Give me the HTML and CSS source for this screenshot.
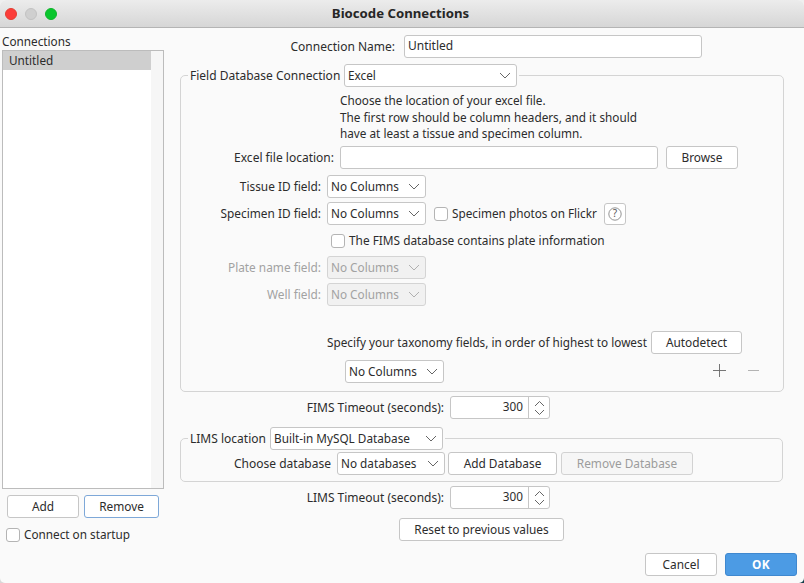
FILE: index.html
```html
<!DOCTYPE html>
<html lang="en">
<head>
    <meta charset="UTF-8">
    <meta name="viewport" content="width=device-width, initial-scale=1.0">
    <title>Biocode Connections</title>
    <link rel="stylesheet" href="styles.css">
</head>
<body>
<div class="window">

    <div class="titlebar">
        <span class="light red"></span>
        <span class="light grey"></span>
        <span class="light green"></span>
        <div class="title">Biocode Connections</div>
    </div>

    <div class="content">

        <!-- Connections list -->
        <div class="sidebar">
            <div class="side-label">Connections</div>
            <div class="list">
                <div class="list-items"><div class="list-item">Untitled</div></div>
                <div class="scroll-track"></div>
            </div>
            <div class="side-buttons">
                <button class="btn btn-add">Add</button>
                <button class="btn btn-remove">Remove</button>
            </div>
            <label class="check side-check"><span class="box"></span>Connect on startup</label>
        </div>

        <div class="main">

            <div class="row name-row">
                <span class="lbl lbl-name">Connection Name:</span>
                <input class="field name-field" type="text" value="Untitled">
            </div>

            <!-- FIMS -->
            <fieldset class="group fims-group">
                <legend class="legend">
                    <span class="legend-fims">Field Database Connection</span>
                    <div class="combo combo-excel">Excel
                        <svg class="chev" width="12" height="7" viewBox="0 0 12 7"><path d="M1 1l5 5 5-5"/></svg>
                    </div>
                </legend>

                <div class="hint">
                    Choose the location of your excel file.<br>
                    The first row should be column headers, and it should<br>
                    have at least a tissue and specimen column.
                </div>

                <div class="row excel-row">
                    <span class="lbl lbl-excel">Excel file location:</span>
                    <input class="field excel-field" type="text">
                    <button class="btn btn-browse">Browse</button>
                </div>

                <div class="row tissue-row">
                    <span class="lbl lbl-field">Tissue ID field:</span>
                    <div class="combo combo-col">No Columns
                        <svg class="chev" width="12" height="7" viewBox="0 0 12 7"><path d="M1 1l5 5 5-5"/></svg>
                    </div>
                </div>

                <div class="row small-gap">
                    <span class="lbl lbl-field">Specimen ID field:</span>
                    <div class="combo combo-col">No Columns
                        <svg class="chev" width="12" height="7" viewBox="0 0 12 7"><path d="M1 1l5 5 5-5"/></svg>
                    </div>
                    <label class="check flickr-check"><span class="box"></span><span class="flickr-text">Specimen photos on Flickr</span></label>
                    <button class="help" aria-label="Help">
                        <svg width="14" height="14" viewBox="0 0 14 14"><circle cx="7" cy="7" r="6.2"/><text x="7" y="10.4" text-anchor="middle">?</text></svg>
                    </button>
                </div>

                <div class="row small-gap plate-row">
                    <label class="check"><span class="box"></span>The FIMS database contains plate information</label>
                </div>

                <div class="row small-gap disabled">
                    <span class="lbl lbl-field">Plate name field:</span>
                    <div class="combo combo-col">No Columns
                        <svg class="chev" width="12" height="7" viewBox="0 0 12 7"><path d="M1 1l5 5 5-5"/></svg>
                    </div>
                </div>

                <div class="row small-gap disabled">
                    <span class="lbl lbl-field">Well field:</span>
                    <div class="combo combo-col">No Columns
                        <svg class="chev" width="12" height="7" viewBox="0 0 12 7"><path d="M1 1l5 5 5-5"/></svg>
                    </div>
                </div>

                <div class="row taxonomy-row">
                    <span class="taxonomy-text">Specify your taxonomy fields, in order of highest to lowest</span>
                    <button class="btn btn-auto">Autodetect</button>
                </div>

                <div class="row taxon-row">
                    <div class="combo combo-col">No Columns
                        <svg class="chev" width="12" height="7" viewBox="0 0 12 7"><path d="M1 1l5 5 5-5"/></svg>
                    </div>
                    <svg class="plus" width="13" height="13" viewBox="0 0 13 13"><path d="M6.5 0v13M0 6.5h13"/></svg>
                    <svg class="minus" width="11" height="13" viewBox="0 0 11 13"><path d="M0 6.5h11"/></svg>
                </div>
            </fieldset>

            <div class="row timeout-row fims-timeout">
                <span class="lbl lbl-timeout">FIMS Timeout (seconds):</span>
                <div class="spinner">
                    <span class="spin-value">300</span>
                    <span class="spin-arrows">
                        <svg width="11" height="16" viewBox="0 0 11 16"><path d="M1 6l4.5-4.5L10 6M1 10l4.5 4.5L10 10"/></svg>
                    </span>
                </div>
            </div>

            <!-- LIMS -->
            <fieldset class="group lims-group">
                <legend class="legend">
                    <span class="legend-lims">LIMS location</span>
                    <div class="combo combo-lims">Built-in MySQL Database
                        <svg class="chev" width="12" height="7" viewBox="0 0 12 7"><path d="M1 1l5 5 5-5"/></svg>
                    </div>
                </legend>
                <div class="row db-row">
                    <span class="lbl lbl-db">Choose database</span>
                    <div class="combo combo-db">No databases
                        <svg class="chev" width="12" height="7" viewBox="0 0 12 7"><path d="M1 1l5 5 5-5"/></svg>
                    </div>
                    <button class="btn btn-add-db">Add Database</button>
                    <button class="btn btn-remove-db" disabled>Remove Database</button>
                </div>
            </fieldset>

            <div class="row timeout-row lims-timeout">
                <span class="lbl lbl-timeout">LIMS Timeout (seconds):</span>
                <div class="spinner">
                    <span class="spin-value">300</span>
                    <span class="spin-arrows">
                        <svg width="11" height="16" viewBox="0 0 11 16"><path d="M1 6l4.5-4.5L10 6M1 10l4.5 4.5L10 10"/></svg>
                    </span>
                </div>
            </div>

            <button class="btn btn-reset">Reset to previous values</button>

            <div class="footer">
                <button class="btn btn-cancel">Cancel</button>
                <button class="btn btn-ok">OK</button>
            </div>
        </div>
    </div>
</div>
</body>
</html>
```

FILE: styles.css
```css
* {
    box-sizing: border-box;
}
html, body {
    margin: 0;
    height: 100%;
    overflow: hidden;
}
body {
    font-family: "Noto Sans", sans-serif;
    font-size: 12px;
    color: #2c2c2c;
    /* desktop showing through the window's rounded corners */
    background: linear-gradient(to right, #d8d8d8 50%, #123f4a 50%) bottom / 100% 8px no-repeat, #efefef;
}
.window {
    width: 804px;
    height: 583px;
    overflow: hidden;
    background-color: #fafafa;
    border-radius: 6px 6px 5px 5px;
}

/* Title bar */
.titlebar {
    display: flex;
    align-items: center;
    height: 28px;
    padding-left: 5px;
    padding-top: 1px;
    gap: 8px;
    position: relative;
    background: linear-gradient(#ececec, #d6d6d6);
    border-bottom: 1px solid #b4b4b4;
}
.light {
    width: 12px;
    height: 12px;
    border-radius: 50%;
}
.red {
    background-color: #fc3d39;
    border: 1px solid #e33e32;
}
.grey {
    background-color: #cfcfcf;
    border: 1px solid #c2c2c2;
}
.green {
    background-color: #09c62d;
    border: 1px solid #0db52a;
}
.title {
    position: absolute;
    left: 0;
    right: 3px;
    top: 5px;
    text-align: center;
    font-size: 13.2px;
    font-weight: 700;
    line-height: 17px;
    color: #262626;
}

.content {
    display: flex;
}

/* Connections list */
.sidebar {
    width: 164px;
    flex: none;
    padding-left: 2px;
    font-size: 11.75px;
}
.side-label {
    line-height: 17px;
    margin-top: 5px;
}
.list {
    display: flex;
    height: 439px;
    border: 1px solid #bcbcbc;
    background-color: white;
}
.list-items {
    flex: 1;
}
.list-item {
    height: 19px;
    line-height: 19px;
    padding-left: 6px;
    background-color: #cfcfcf;
}
.scroll-track {
    width: 12px;
    background-color: #f6f6f6;
}
.side-buttons {
    display: flex;
    gap: 5px;
    margin: 6px 0 0 5px;
}
.side-check {
    margin: 8px 0 0 4px;
}

/* Controls */
.btn {
    height: 23px;
    padding: 0 0 2px;
    font-family: inherit;
    font-size: 11.85px;
    color: #2c2c2c;
    background-color: white;
    border: 1px solid #c6c6c6;
    border-radius: 3px;
}
.btn-add { width: 72px; }
.btn-remove { width: 75px; border-color: #7ea8d8; }
.btn-browse { width: 72px; margin-left: 2px; }
.btn-auto { width: 91px; }
.btn-add-db { width: 109px; margin-left: -3px; }
.btn-remove-db {
    width: 132px;
    margin-left: -2px;
    color: #9c9c9c;
    background-color: #f6f6f6;
    border-color: #d2d2d2;
}
.btn-reset {
    display: block;
    width: 165px;
    margin: 9px 0 0 235px;
}
.btn-cancel { width: 72px; }
.btn-ok {
    width: 72px;
    color: white;
    font-weight: 700;
    background-color: #4c9be4;
    border-color: #3f88cf;
    letter-spacing: 0.5px;
}
.field {
    height: 23px;
    padding: 0 3px 2px;
    font-family: inherit;
    font-size: 12px;
    color: #2c2c2c;
    background-color: white;
    border: 1px solid #c6c6c6;
    border-radius: 3px;
}
.combo {
    display: flex;
    align-items: center;
    justify-content: space-between;
    height: 23px;
    padding: 0 5px 2px 3px;
    flex: none;
    font-size: 11.75px;
    background-color: white;
    border: 1px solid #c6c6c6;
    border-radius: 3px;
}
.chev {
    flex: none;
    margin-top: 2px;
    fill: none;
    stroke: #555;
    stroke-width: 0.9;
}
.combo-col { width: 99px; }
.combo-excel { width: 173px; }
.combo-lims { width: 173px; }
.combo-db { width: 108px; }
.check {
    display: flex;
    align-items: center;
    gap: 4px;
    line-height: 17px;
}
.box {
    width: 14px;
    height: 14px;
    flex: none;
    background-color: white;
    border: 1px solid #b4b4b4;
    border-radius: 3px;
}
.main .check {
    font-size: 11.85px;
}

/* Form layout */
.main {
    flex: 1;
}
.row {
    display: flex;
    align-items: center;
    gap: 6px;
}
.lbl {
    flex: none;
    padding-bottom: 1px;
    text-align: right;
}
.name-row {
    margin-top: 7px;
}
.lbl-name { width: 231px; margin-right: 3px; }
.name-field { width: 298px; }
.group {
    margin: 0 0 0 16px;
    padding: 0 0 8px;
    min-width: 0;
    border: 1px solid #d4d4d4;
    border-radius: 5px;
}
.fims-group {
    width: 604px;
    margin-top: 6px;
}
.lims-group {
    width: 603px;
    margin-top: 8px;
    padding-bottom: 6px;
}
.legend {
    display: flex;
    align-items: center;
    margin-left: 7px;
    padding: 0 2px;
}
.legend span {
    padding-bottom: 1px;
}
.legend-fims { width: 154px; }
.legend-lims { width: 80px; }
.hint {
    height: 50px;
    margin: 5px 0 0 159px;
    font-size: 11.75px;
    line-height: 16.5px;
}
.excel-row { margin-top: 4px; }
.lbl-excel { width: 153px; }
.excel-field { width: 318px; }
.tissue-row { margin-top: 6px; }
.small-gap { margin-top: 4px; }
.lbl-field { width: 140px; font-size: 11.85px; }
.flickr-check { margin-left: 2px; }
.flickr-text { width: 152px; font-size: 11.75px; }
.help {
    display: flex;
    align-items: center;
    justify-content: center;
    width: 22px;
    height: 22px;
    padding: 0;
    margin-left: -6px;
    background-color: white;
    border: 1px solid #c6c6c6;
    border-radius: 3px;
}
.help circle {
    fill: none;
    stroke: #777;
    stroke-width: 0.8;
}
.help text {
    font-family: "Noto Sans", sans-serif;
    font-size: 10px;
    fill: #555;
}
.plate-row {
    height: 23px;
    padding-left: 150px;
}
.disabled {
    color: #a2a2a2;
}
.disabled .combo {
    background-color: #f1f1f1;
    border-color: #d4d4d4;
}
.disabled .chev {
    stroke: #a8a8a8;
}
.taxonomy-row {
    margin-top: 25px;
    padding-left: 146px;
    gap: 0;
}
.taxonomy-text {
    width: 324px;
    padding-bottom: 2px;
    font-size: 11.75px;
}
.taxon-row {
    margin-top: 6px;
    padding-left: 164px;
}
.plus {
    margin: 0 0 2px 263px;
    fill: none;
    stroke: #666;
    stroke-width: 0.9;
}
.minus {
    margin: 0 0 2px 16px;
    fill: none;
    stroke: #aaa;
    stroke-width: 0.9;
}
.lbl-timeout { width: 280px; }
.spinner {
    display: flex;
    width: 100px;
    height: 23px;
    font-size: 11.75px;
    background-color: white;
    border: 1px solid #c6c6c6;
    border-radius: 3px;
}
.spin-value {
    flex: 1;
    text-align: right;
    line-height: 19px;
    padding-right: 5px;
}
.spin-arrows {
    display: flex;
    align-items: center;
    justify-content: center;
    width: 21px;
    border-left: 1px solid #c6c6c6;
}
.spin-arrows svg {
    fill: none;
    stroke: #555;
    stroke-width: 0.9;
}
.fims-timeout { margin-top: 4px; }
.lims-timeout { margin-top: 4px; }
.db-row { margin-top: 2px; }
.lbl-db { width: 150px; }
.footer {
    display: flex;
    justify-content: flex-end;
    gap: 8px;
    margin-top: 12px;
    padding-right: 7px;
}
```
